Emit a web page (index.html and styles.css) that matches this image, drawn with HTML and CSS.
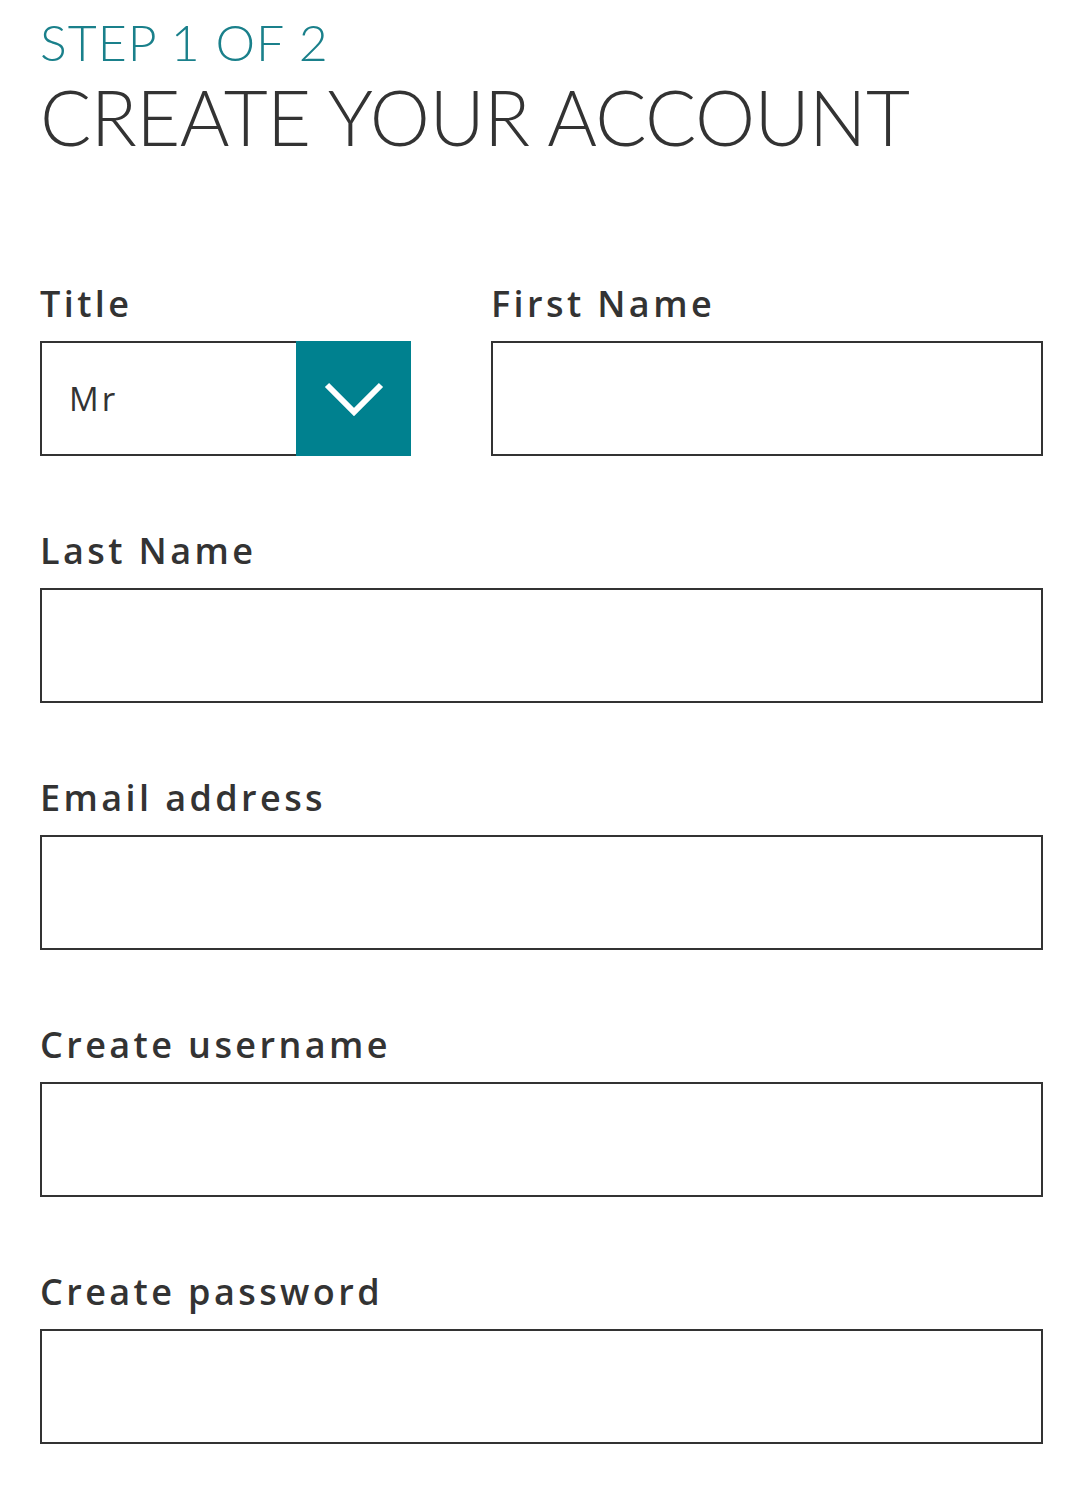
FILE: index.html
```html
<html lang="en">
<head>
    <meta charset="UTF-8">
    <meta name="viewport" content="width=device-width, initial-scale=1.0">
    <title>Create your account</title>
    <link rel="stylesheet" href="styles.css">
</head>
<body>
    <div class="signup">
        <div class="step">STEP 1 OF 2</div>
        <h1 class="heading">CREATE YOUR ACCOUNT</h1>

        <form class="form">
            <div class="row">
                <div class="field field-title">
                    <label for="title">Title</label>
                    <div class="select">
                        <span class="select-value">Mr</span>
                        <span class="select-arrow">
                            <svg width="60" height="34" viewBox="0 0 60 34">
                                <polyline points="3,3 30,30 57,3" fill="none" stroke="#fff" stroke-width="6"/>
                            </svg>
                        </span>
                    </div>
                </div>
                <div class="field field-first">
                    <label for="first">First Name</label>
                    <input id="first" type="text">
                </div>
            </div>
            <div class="field">
                <label for="last">Last Name</label>
                <input id="last" type="text">
            </div>
            <div class="field">
                <label for="email">Email address</label>
                <input id="email" type="email">
            </div>
            <div class="field">
                <label for="username">Create username</label>
                <input id="username" type="text">
            </div>
            <div class="field">
                <label for="password">Create password</label>
                <input id="password" type="password">
            </div>
        </form>
    </div>
</body>
</html>
```

FILE: styles.css
```css
body {
    margin: 0;
    background-color: #fff;
    color: #333;
    font-family: "Open Sans", sans-serif;
}

.signup {
    padding: 12px 37px 0 40px;
}

.step {
    font-family: Lato, sans-serif;
    font-weight: 300;
    font-size: 50px;
    line-height: 60px;
    letter-spacing: 1px;
    color: #1a808b;
}

.heading {
    margin: 0;
    font-family: Lato, sans-serif;
    font-weight: 300;
    font-size: 76px;
    line-height: 90px;
    letter-spacing: -0.6px;
    color: #333;
}

.form {
    margin-top: 117px;
}

.row {
    display: grid;
    grid-template-columns: 371px 1fr;
    gap: 80px;
}

.field {
    display: flex;
    flex-direction: column;
    margin-bottom: 70px;
}

label {
    font-size: 36px;
    font-weight: 600;
    letter-spacing: 3.4px;
    line-height: 50px;
    margin-bottom: 12px;
}

input {
    height: 115px;
    box-sizing: border-box;
    border: 2px solid #333;
    border-radius: 0;
    padding: 0 28px;
    font-family: "Open Sans", sans-serif;
    font-size: 32px;
}

.select {
    display: flex;
    height: 115px;
    box-sizing: border-box;
    border: 2px solid #333;
    border-right: none;
}

.select-value {
    flex: 1;
    display: flex;
    align-items: center;
    padding-left: 27px;
    font-size: 33px;
    letter-spacing: 3px;
}

.select-arrow {
    width: 115px;
    margin: -2px 0;
    background-color: #00818f;
    display: flex;
    align-items: center;
    justify-content: center;
}
```
